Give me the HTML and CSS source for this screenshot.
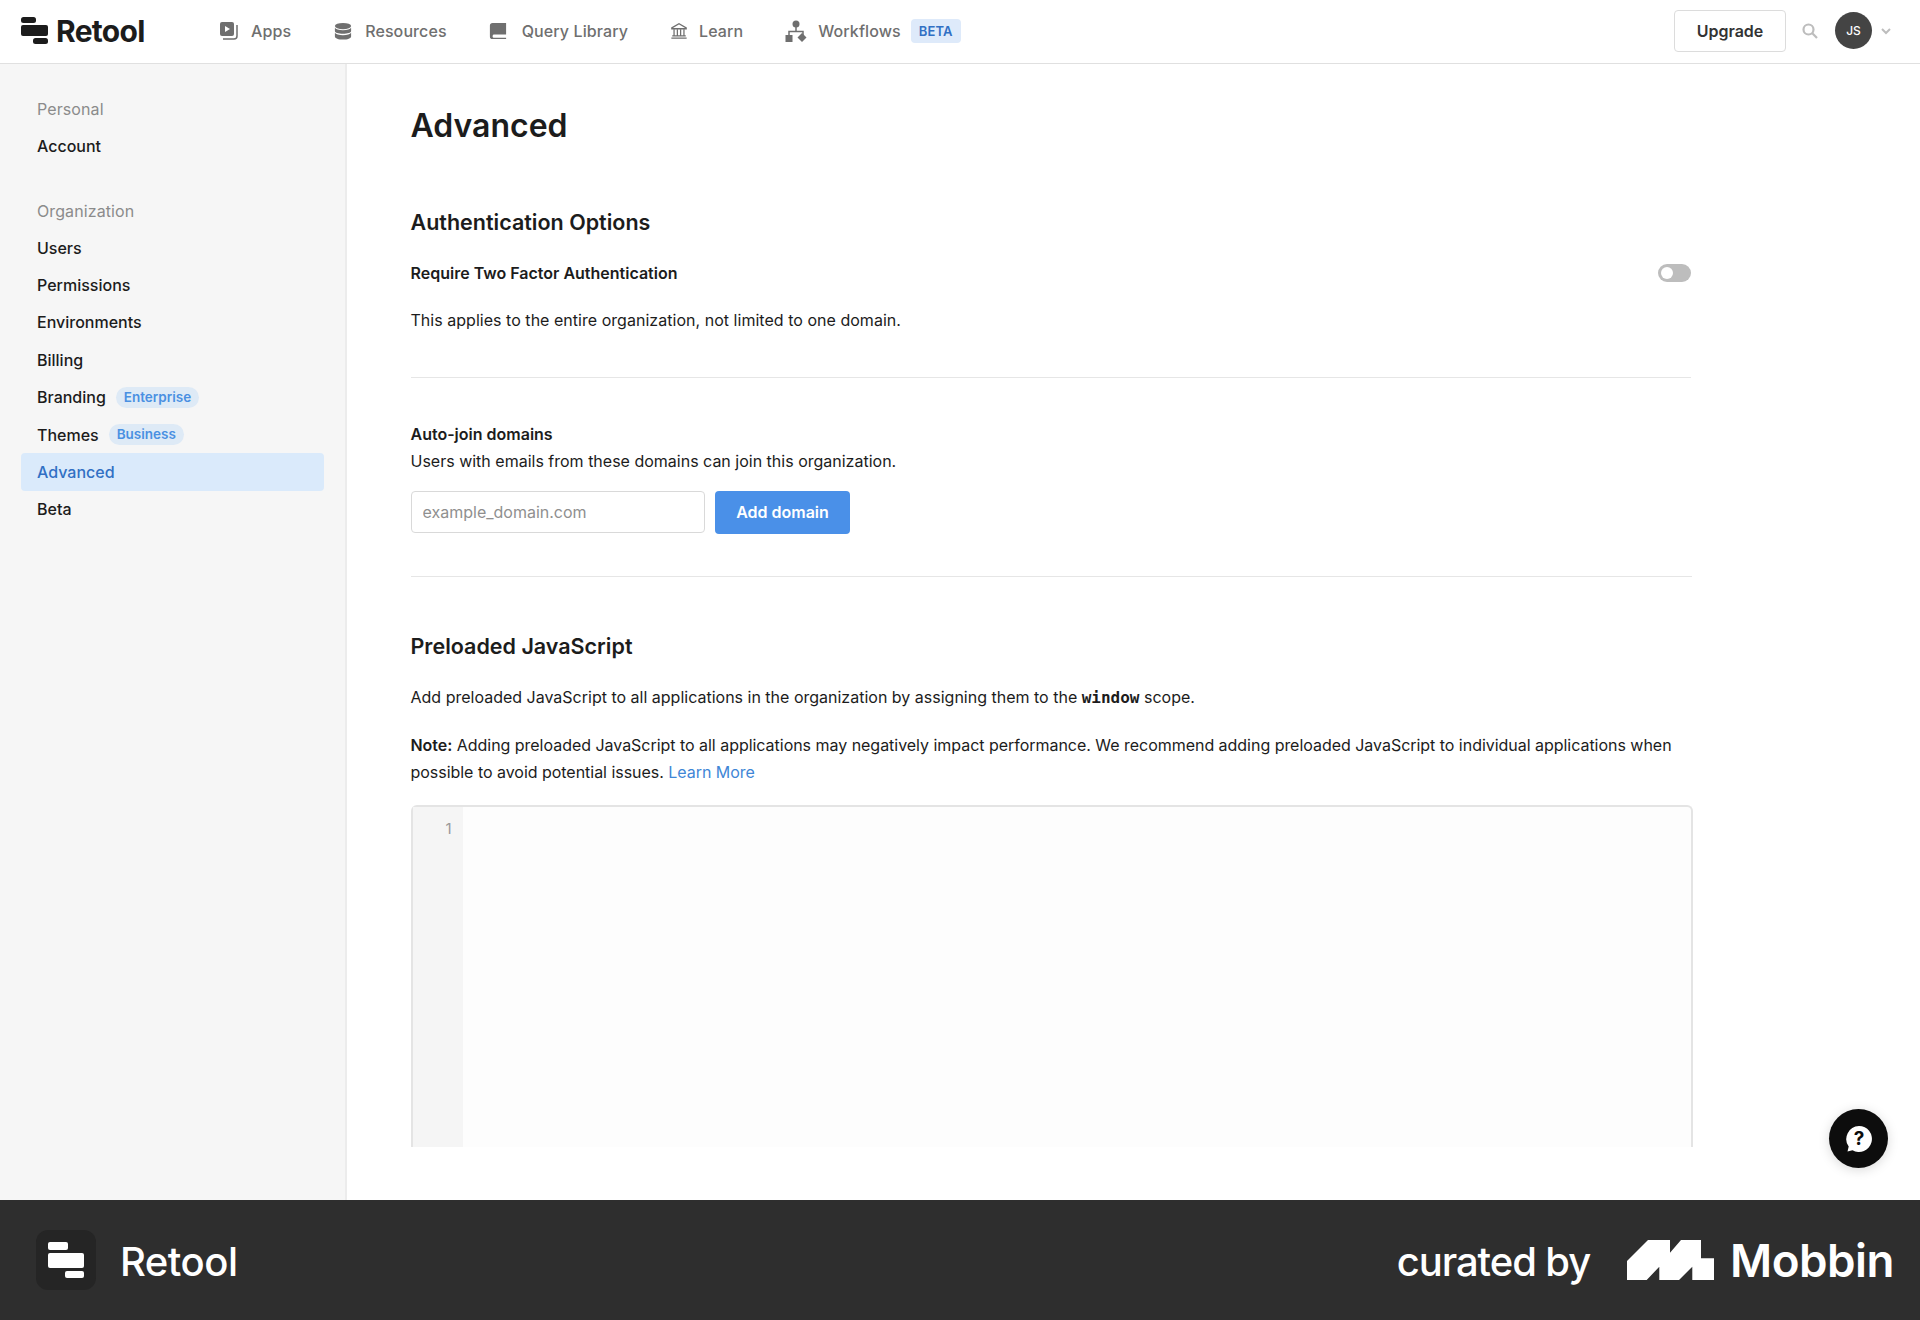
FILE: index.html
```html
<!DOCTYPE html>
<html lang="en">
<head>
    <meta charset="UTF-8" />
    <title>Retool - Advanced</title>
    <link rel="stylesheet" href="styles.css">
</head>
<body>
    <div id="app">
        <header id="topbar">
            <div id="brand">
                <svg class="brand-mark" width="27" height="27" viewBox="0 0 27 27">
                    <rect x="0" y="0" width="15" height="6" rx="2.5" fill="#1c1c1c" />
                    <rect x="0" y="8" width="27" height="11" rx="2" fill="#1c1c1c" />
                    <rect x="12" y="21" width="15" height="6" rx="2.5" fill="#1c1c1c" />
                </svg>
                <span>Retool</span>
            </div>
            <nav id="mainnav">
                <a class="nav-item nav-apps">
                    <svg width="20" height="20" viewBox="0 0 20 20">
                        <rect x="1" y="1" width="14" height="14" rx="2" fill="#6f6f6f" />
                        <path d="M6 5l5 3-5 3z" fill="#fff" />
                        <path d="M18 4v11a3 3 0 0 1-3 3H4" fill="none" stroke="#6f6f6f" stroke-width="1.5" />
                    </svg>
                    Apps
                </a>
                <a class="nav-item">
                    <svg width="18" height="18" viewBox="0 0 20 20">
                        <ellipse cx="10" cy="4.5" rx="9" ry="3.5" fill="#6f6f6f" />
                        <path d="M1 6.500v3.500c0 2 4 3 9 3s9-1 9-3V6.500c-1 1.800-4.400 2.800-9 2.800s-8-1-9-2.800z" fill="#6f6f6f" />
                        <path d="M1 12v4c0 2 4 3.500 9 3.500s9-1.500 9-3.500v-4c-1 1.800-4.400 2.800-9 2.800s-8-1-9-2.800z" fill="#6f6f6f" />
                    </svg>
                    Resources
                </a>
                <a class="nav-item nav-query">
                    <svg width="18" height="18" viewBox="0 0 20 20">
                        <path d="M4 1h15v13H5a2 2 0 0 0 0 3.500h14V19H4a3 3 0 0 1-3-3V4a3 3 0 0 1 3-3z" fill="#6f6f6f" />
                    </svg>
                    Query Library
                </a>
                <a class="nav-item nav-learn">
                    <svg width="18" height="18" viewBox="0 0 20 20" fill="none" stroke="#6f6f6f" stroke-width="1.4">
                        <path d="M2 6.500L10 2l8 4.500v1H2z" />
                        <path d="M4.500 8v7M8.200 8v7M11.800 8v7M15.500 8v7M2.500 15.500h15M1.500 18h17" />
                    </svg>
                    Learn
                </a>
                <a class="nav-item nav-flows">
                    <svg width="22" height="22" viewBox="0 0 22 22">
                        <circle cx="11" cy="4" r="3.5" fill="#6f6f6f" />
                        <path d="M11 7v4M4 16v-4.500h14V16" fill="none" stroke="#6f6f6f" stroke-width="1.5" />
                        <rect x="0.5" y="15" width="7" height="7" fill="#6f6f6f" />
                        <path d="M17 13l4.500 4.500-4.500 4.500-4.500-4.500z" fill="#6f6f6f" />
                    </svg>
                    Workflows
                    <span class="beta">BETA</span>
                </a>
            </nav>
            <div id="topbar-right">
                <button id="upgrade">Upgrade</button>
                <svg width="18" height="18" viewBox="0 0 18 18" fill="none" stroke="#bdbdbd" stroke-width="2.2">
                    <circle cx="7.500" cy="7.500" r="5" />
                    <path d="M11.300 11.300L16 16" />
                </svg>
                <div id="avatar">JS</div>
                <svg class="caret" width="12" height="8" viewBox="0 0 12 8" fill="none" stroke="#bdbdbd" stroke-width="2">
                    <path d="M2 2l4 4 4-4" />
                </svg>
            </div>
        </header>

        <div id="content">
            <aside id="sidebar">
                <div class="side-label">Personal</div>
                <a class="side-item">Account</a>
                <div class="side-label org">Organization</div>
                <a class="side-item">Users</a>
                <a class="side-item">Permissions</a>
                <a class="side-item">Environments</a>
                <a class="side-item">Billing</a>
                <a class="side-item">Branding <span class="plan">Enterprise</span></a>
                <a class="side-item">Themes <span class="plan">Business</span></a>
                <a class="side-item active">Advanced</a>
                <a class="side-item">Beta</a>
            </aside>

            <main id="page">
                <h1>Advanced</h1>

                <section id="auth">
                    <h2>Authentication Options</h2>
                    <div class="setting-row">
                        <strong>Require Two Factor Authentication</strong>
                        <span class="toggle"></span>
                    </div>
                    <p>This applies to the entire organization, not limited to one domain.</p>
                </section>

                <section id="domains">
                    <strong>Auto-join domains</strong>
                    <p>Users with emails from these domains can join this organization.</p>
                    <div class="domain-form">
                        <input placeholder="example_domain.com">
                        <button>Add domain</button>
                    </div>
                </section>

                <section id="preload">
                    <h2>Preloaded JavaScript</h2>
                    <p class="intro">Add preloaded JavaScript to all applications in the organization by assigning them to the <code>window</code> scope.</p>
                    <p class="note"><strong>Note:</strong> Adding preloaded JavaScript to all applications may negatively impact performance. We recommend adding preloaded JavaScript to individual applications when possible to avoid potential issues. <a>Learn More</a></p>
                    <div id="editor">
                        <div class="gutter">1</div>
                        <div class="code"></div>
                    </div>
                </section>
            </main>
        </div>

        <div id="help">
            <svg width="28" height="28" viewBox="0 0 28 28">
                <path d="M14 1a13 13 0 1 1-6.500 24.300L2.500 26.500l1.200-5A13 13 0 0 1 14 1z" fill="#fff" />
                <text x="14" y="20" text-anchor="middle" class="help-mark">?</text>
            </svg>
        </div>

        <footer id="credit">
            <div class="credit-left">
                <div class="tile">
                    <svg width="36" height="36" viewBox="0 0 36 36">
                        <rect x="0" y="0" width="20" height="8" rx="2" fill="#fff" />
                        <rect x="0" y="11" width="36" height="15" rx="2" fill="#fff" />
                        <rect x="17" y="29" width="19" height="7" rx="2" fill="#fff" />
                    </svg>
                </div>
                <span class="credit-name">Retool</span>
            </div>
            <div class="credit-right">
                <span class="curated">curated by</span>
                <svg width="87" height="40" viewBox="0 0 87 40">
                    <path d="M0 40V21L21 0H43V12.700L54 0H74V18.300H87V40H65.300V26.700L52 40H32.300V26.700L19.700 40Z" fill="#fff" />
                </svg>
                <span class="mobbin">Mobbin</span>
            </div>
        </footer>
    </div>
</body>
</html>
```

FILE: styles.css
```css
* {
    box-sizing: border-box;
}

body {
    margin: 0;
    padding: 0;
    font-family: Inter, "Liberation Sans", sans-serif;
    font-size: 16px;
    color: #1c1c1c;
    background: #fff;
}

#app {
    position: relative;
    width: 1920px;
    height: 1320px;
    display: flex;
    flex-direction: column;
    overflow: hidden;
}

#topbar {
    height: 64px;
    flex: none;
    display: flex;
    align-items: center;
    border-bottom: 1px solid #e0e0e0;
    padding: 0 28px 2px 21px;
}

#brand {
    display: flex;
    align-items: center;
    gap: 8px;
    width: 198px;
    font-size: 30px;
    font-weight: 700;
    letter-spacing: -0.7px;
}

#mainnav {
    display: flex;
    align-items: center;
    gap: 42px;
}

.nav-item {
    display: flex;
    align-items: center;
    gap: 13px;
    font-size: 16px;
    font-weight: 500;
    letter-spacing: 0.1px;
    color: #6f6f6f;
}

.nav-apps {
    gap: 12px;
    margin-right: 1px;
}

.nav-query svg {
    margin-right: 2px;
}

.nav-learn svg {
    margin-right: -2px;
}

.nav-flows svg {
    margin-right: -2px;
}

.beta {
    margin-left: -3px;
    padding: 3px 8px;
    font-size: 13px;
    font-weight: 600;
    line-height: 18px;
    color: #3170c4;
    background: #deeafa;
    border-radius: 4px;
}

#topbar-right {
    margin-left: auto;
    display: flex;
    align-items: center;
    gap: 16px;
}

#upgrade {
    width: 112px;
    height: 42px;
    font: 600 16px Inter, sans-serif;
    color: #333;
    background: #fff;
    border: 1px solid #dcdcdc;
    border-radius: 4px;
    margin-right: -1px;
}

#avatar {
    width: 37px;
    height: 37px;
    border-radius: 50%;
    display: flex;
    align-items: center;
    justify-content: center;
    background: #444;
    color: #fff;
    font-size: 12px;
    font-weight: 500;
}

.caret {
    margin-left: -8px;
}

#content {
    flex: 1;
    display: flex;
    min-height: 0;
}

#sidebar {
    width: 347px;
    flex: none;
    padding: 27px 21px 0 21px;
    background: #f6f6f6;
    border-right: 2px solid #ececec;
}

.side-label {
    height: 36px;
    line-height: 37px;
    padding-left: 16px;
    letter-spacing: 0.1px;
    color: #8b8b8b;
}

.side-label.org {
    margin-top: 28.5px;
}

.side-item {
    display: flex;
    align-items: center;
    gap: 10px;
    height: 37.4px;
    padding-left: 16px;
    font-weight: 500;
    font-size: 16px;
    color: #1c1c1c;
    border-radius: 4px;
}

.side-item.active {
    color: #3170c4;
    background: #daeafb;
}

.plan {
    padding: 0 8px;
    font-size: 13.5px;
    font-weight: 600;
    line-height: 21px;
    color: #4a90e2;
    background: #deeaf6;
    border-radius: 11px;
}

#page {
    flex: 1;
    min-width: 0;
    padding: 0 229px 0 63.5px;
}

h1 {
    margin: 0;
    padding-top: 40px;
    font-size: 32px;
    line-height: 44px;
    font-weight: 600;
}

h2 {
    margin: 0;
    font-size: 21.5px;
    line-height: 30px;
    font-weight: 600;
}

p {
    margin: 0;
    line-height: 27px;
}

strong {
    font-weight: 600;
}

#auth {
    padding-top: 59px;
    padding-bottom: 43px;
    border-bottom: 1px solid #e6e6e6;
}

.setting-row {
    display: flex;
    align-items: center;
    justify-content: space-between;
    margin-top: 21px;
    height: 30px;
}

#auth p {
    margin-top: 19px;
    letter-spacing: 0.03px;
}

.toggle {
    position: relative;
    width: 33px;
    height: 18px;
    border-radius: 9px;
    background: #bdbdbd;
}

.toggle::after {
    content: "";
    position: absolute;
    left: 3px;
    top: 3px;
    width: 12px;
    height: 12px;
    border-radius: 50%;
    background: #fff;
}

#domains {
    padding-top: 43px;
    padding-bottom: 42px;
    border-bottom: 1px solid #e6e6e6;
    margin-right: -1px;
}

#domains strong {
    display: block;
    line-height: 27px;
}

.domain-form {
    display: flex;
    gap: 10.5px;
    margin-top: 16px;
}

.domain-form input {
    width: 294px;
    height: 42px;
    padding: 0 11px;
    font: 400 16px Inter, sans-serif;
    border: 1px solid #d9d9d9;
    border-radius: 4px;
}

.domain-form input::placeholder {
    color: #8f8f8f;
}

.domain-form button {
    width: 135px;
    height: 43px;
    padding: 0 0 2px;
    border: none;
    border-radius: 4px;
    background: #4a90e8;
    color: #fff;
    font: 600 16px Inter, sans-serif;
}

#preload {
    padding-top: 54px;
}

.intro {
    margin-top: 23px;
}

.intro code {
    font-family: "DejaVu Sans Mono", monospace;
    font-size: 16px;
    font-weight: 700;
}

.note {
    margin-top: 20.5px;
    letter-spacing: -0.03px;
}

.note a {
    color: #3f86d6;
}

#editor {
    display: flex;
    margin-top: 19px;
    height: 342px;
    width: 1282px;
    background: #fdfdfd;
    border: 2px solid #e4e4e4;
    border-bottom: none;
    border-radius: 6px 6px 0 0;
}

.gutter {
    width: 50px;
    background: #f5f5f5;
    padding: 13px 11px 0 0;
    text-align: right;
    font-size: 15px;
    line-height: 18px;
    color: #9a9a9a;
}

.code {
    flex: 1;
}

#help {
    position: absolute;
    left: 1829px;
    top: 1109px;
    width: 59px;
    height: 59px;
    border-radius: 50%;
    background: #0d0d0d;
    display: flex;
    align-items: center;
    justify-content: center;
    box-shadow: 0 2px 12px rgba(0, 0, 0, 0.15);
}

.help-mark {
    font: 700 19px Inter, sans-serif;
    fill: #0d0d0d;
}

#credit {
    height: 120px;
    flex: none;
    background: #2e2e2e;
    color: #fff;
    display: flex;
    align-items: center;
    justify-content: space-between;
    padding: 0 26px 0 36px;
}

.credit-left {
    display: flex;
    align-items: center;
    gap: 24px;
    font-size: 40px;
    font-weight: 500;
    letter-spacing: -0.5px;
}

.credit-name {
    padding-top: 2px;
}

.tile {
    width: 60px;
    height: 60px;
    background: #252525;
    border-radius: 12px;
    display: flex;
    align-items: center;
    justify-content: center;
}

.credit-right {
    display: flex;
    align-items: center;
    gap: 16px;
}

.curated {
    padding-top: 2px;
    font-size: 40px;
    font-weight: 500;
    letter-spacing: -1.1px;
    margin-right: 21px;
}

.mobbin {
    font-size: 45.7px;
    font-weight: 600;
    letter-spacing: -0.5px;
}
```
